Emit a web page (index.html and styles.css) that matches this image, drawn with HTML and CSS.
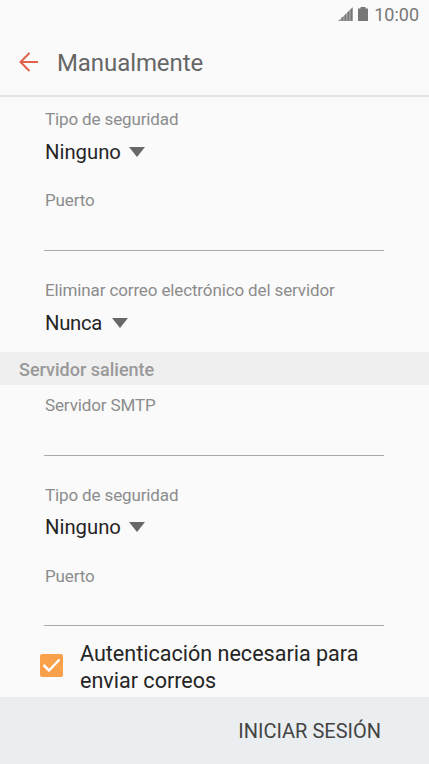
FILE: index.html
```html
<!DOCTYPE html>
<html lang="es">
<head>
<meta charset="utf-8">
<title>Manualmente</title>
<link rel="stylesheet" href="styles.css">
</head>
<body>
<div class="screen">
  <div class="status">
    <svg class="signal" width="16" height="15" viewBox="0 0 16 15"><path d="M0 14L2.7 12V14ZM3.2 14V11L5.700 9V14ZM6.200 14V8.500L8.700 6V14ZM9.200 14V5.500L11.700 3V14ZM12.200 14V2.500L14.700 0.300V14Z"/></svg>
    <svg class="battery" width="10" height="14" viewBox="0 0 10 14"><path d="M0 1.5H2.5V0H7.500V1.500H10V14H0Z"/></svg>
    <span class="clock">10:00</span>
  </div>
  <header class="header">
    <svg class="back" width="20" height="20" viewBox="0 0 20 20"><path d="M19 10H1.500M10.500 1L1.500 10L10.500 19"/></svg>
    <h1 class="title">Manualmente</h1>
  </header>
  <main class="form">
    <section class="select">
      <div class="label">Tipo de seguridad</div>
      <div class="value"><span>Ninguno</span><i class="caret"></i></div>
    </section>
    <section class="input"><div class="label">Puerto</div></section>
    <section class="select">
      <div class="label">Eliminar correo electrónico del servidor</div>
      <div class="value"><span class="never">Nunca</span><i class="caret wide"></i></div>
    </section>
    <h2 class="section"><span>Servidor saliente</span></h2>
    <section class="input smtp"><div class="label">Servidor SMTP</div></section>
    <section class="select outgoing">
      <div class="label">Tipo de seguridad</div>
      <div class="value"><span>Ninguno</span><i class="caret"></i></div>
    </section>
    <section class="input port-out"><div class="label">Puerto</div></section>
    <div class="auth">
      <svg class="check" width="23" height="23" viewBox="0 0 23 23"><rect width="23" height="23" rx="2"/><path d="M3.500 11L9 16.500L19.500 5.500"/></svg>
      <div class="auth-text"><div>Autenticación necesaria para</div><div>enviar correos</div></div>
    </div>
  </main>
  <footer class="footer"><span>INICIAR SESIÓN</span></footer>
</div>
</body>
</html>
```
FILE: styles.css
```css
* { box-sizing: border-box; }
body { margin: 0; background: #fafafa; font-family: Roboto, sans-serif; color: #252525; }
.screen { width: 429px; height: 764px; display: flex; flex-direction: column; overflow: hidden; }
.status { height: 30px; display: flex; justify-content: flex-end; align-items: center; padding: 0 10px 2px 0; color: #777; font-size: 18px; }
.status svg { fill: #777; }
.battery { margin: 0 6px 0 4px; }
.header { height: 67px; border-bottom: 2px solid #e2e2e2; display: flex; align-items: center; padding-left: 19px; }
.back { fill: none; stroke: #df6149; stroke-width: 2; margin-top: -1px; }
.title { margin: 1px 0 0 18px; font-size: 24px; line-height: 28px; font-weight: 400; color: #666; letter-spacing: -0.08px; }
.form { flex: 1; }
.select { height: 86px; padding: 11px 45px 0; }
.label { font-size: 17px; line-height: 22px; color: #8c8c8c; white-space: nowrap; letter-spacing: -0.13px; }
.value { margin-top: 9px; display: flex; align-items: center; font-size: 20.3px; line-height: 26px; }
.never { letter-spacing: -0.3px; }
.caret { margin: 0 0 0 8px; border: 8px solid transparent; border-top: 10px solid #686868; border-bottom: 0; }
.wide { margin-left: 10px; }
.input { height: 68px; margin: 0 45px 0 44px; padding: 6px 0 0 1px; border-bottom: 1px solid #a9a9a9; }
.input + .select { padding-top: 28px; height: 101px; }
.section { margin: 0; height: 33px; line-height: 35px; background: #efefef; padding-left: 19px; color: #999; font-size: 18px; font-weight: 500; }
.smtp { height: 71px; padding-top: 9px; }
.input + .outgoing { height: 102px; }
.input + .outgoing .value { margin-top: 8px; }
.port-out { padding-top: 7px; }
.auth { display: flex; padding: 14px 40px 0; }
.check { margin-top: 14px; }
.check rect { fill: #f9a04a; }
.check path { fill: none; stroke: #fff; stroke-width: 2.5; }
.auth-text { margin-left: 17px; font-size: 21.55px; line-height: 27px; white-space: nowrap; }
.footer { height: 67px; background: #eaeef1; padding: 1px 48px 0; display: flex; align-items: center; justify-content: flex-end; font-size: 20px; color: #444; }
```
